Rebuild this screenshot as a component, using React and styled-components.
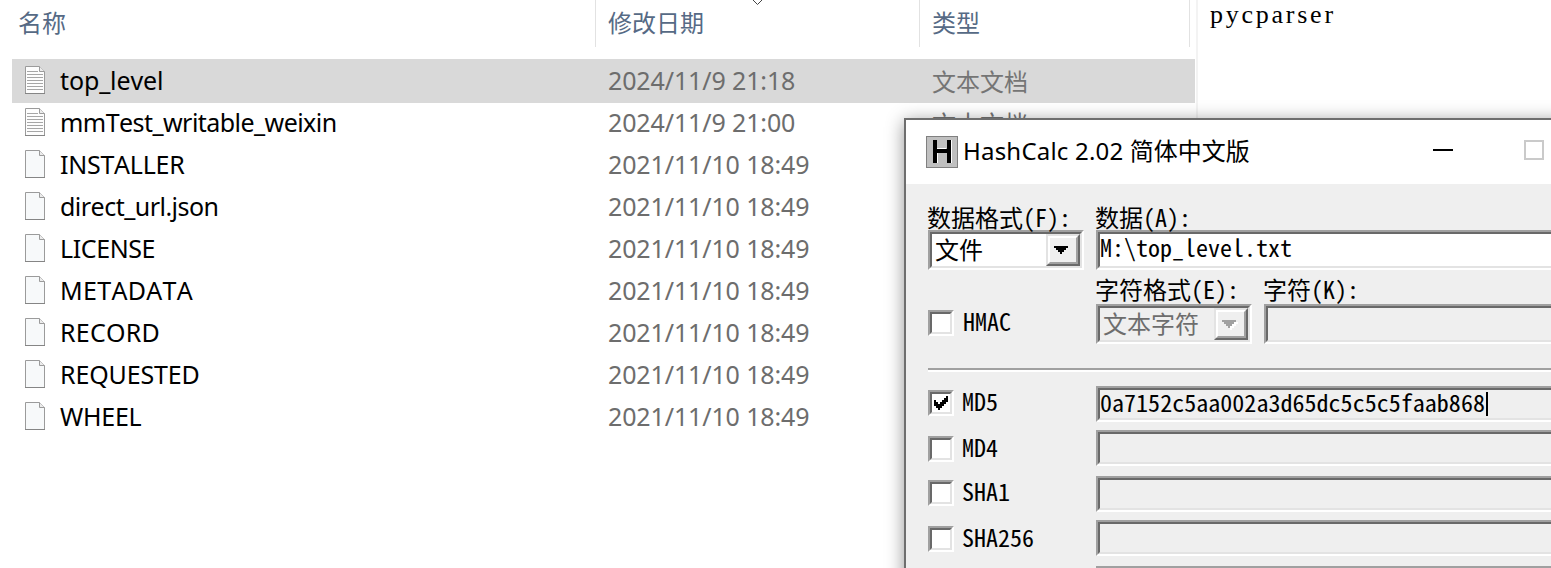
import React from "react";
import styled, { createGlobalStyle, css } from "styled-components";

const GlobalStyle = createGlobalStyle`
  * { box-sizing: border-box; }
  html, body { margin: 0; overflow: hidden; background: #fff; }
`;

const uiFont = '"Noto Sans", "Noto Sans CJK SC", sans-serif';
const bitmapFont = '"Noto Sans Mono CJK SC", "Liberation Mono", "Noto Sans CJK SC", monospace';

const Desktop = styled.div`
  position: relative;
  display: flex;
  width: 1551px;
  height: 568px;
  overflow: hidden;
  background: #fff;
  font-family: ${uiFont};
  font-size: 24px;
  white-space: nowrap;
`;

/* ---------- file list ---------- */
const Explorer = styled.section`
  width: 1196px;
  flex: none;
`;

const columns = css`
  display: grid;
  grid-template-columns: 584px 324px 276px;
`;

const Header = styled.header`
  ${columns}
  height: 47px;
  margin-bottom: 13px;
  grid-template-columns: 596px 324px 270px;
  position: relative;
`;

const HeaderCell = styled.div`
  padding-left: ${(p) => p.$inset}px;
  border-right: 1px solid #e2e2e2;
  color: #566a85;
  font-family: "Noto Sans CJK SC", sans-serif;
  line-height: 44px;
`;

const SortMark = styled.svg`
  position: absolute;
  left: 751px;
  top: 0;
`;

const Row = styled.div`
  ${columns}
  height: 42px;
  margin: 0 1px 0 12px;
  align-items: center;
  line-height: 40px;
  ${(p) =>
    p.$selected &&
    css`
      background: #d9d9d9;
      box-shadow: 0 -1px #d9d9d9, 0 1px #d9d9d9;
    `}
`;

const NameCell = styled.div`
  display: flex;
  align-items: center;
  gap: 14px;
  padding: 0 0 2px 12px;
  color: #000;
`;

const FileName = styled.span`
  font-size: 25px;
  letter-spacing: ${(p) => p.$track}px;
  font-kerning: none;
`;

const DateCell = styled.div`
  padding: 0 0 2px 12px;
  color: #6d6d6d;
  font-size: 25px;
  font-kerning: none;
  letter-spacing: -0.12px;
`;

const TypeCell = styled.div`
  padding: 0 0 1px 12px;
  color: #757575;
  font-family: "Noto Sans CJK SC", sans-serif;
`;

/* ---------- preview pane ---------- */
const Preview = styled.aside`
  flex: 1;
  padding: 0 0 0 12px;
  border-left: 2px solid #f3f3f3;
  font-family: "Liberation Serif", serif;
  font-size: 26px;
  line-height: 30px;
  letter-spacing: 2.75px;
`;

/* ---------- dialog ---------- */
const Dialog = styled.section`
  position: absolute;
  left: 904px;
  top: 118px;
  width: 680px;
  height: 480px;
  border: 2px solid #6e6e6e;
  background: #efefef;
  box-shadow: 0 3px 17px rgba(0, 0, 0, 0.42);
`;

const TitleBar = styled.div`
  display: flex;
  align-items: center;
  height: 64px;
  padding-left: 20px;
  background: #fff;
`;

const Title = styled.h1`
  width: 463px;
  margin: 0 0 4px 5px;
  color: #000;
  font-size: 24px;
  font-weight: 400;
  letter-spacing: 0.2px;
  line-height: 40px;
`;

const TitleCjk = styled.span`
  font-family: "Noto Sans CJK SC", sans-serif;
  letter-spacing: 0;
`;

const MinimizeBar = styled.div`
  width: 20px;
  height: 2px;
  margin: 0 71px 4px 7px;
  background: #000;
`;

const MaximizeBox = styled.div`
  width: 20px;
  height: 20px;
  margin-bottom: 4px;
  border: 2px solid #cacaca;
`;

const Body = styled.div`
  padding: 18px 0 0 22px;
  color: #000;
  font-family: ${bitmapFont};
  font-size: 24px;
`;

const Line = styled.div`
  display: flex;
  align-items: flex-start;
  height: ${(p) => p.$height}px;
`;

const Stack = styled.div`
  width: ${(p) => p.$width}px;
  flex: none;
  padding-top: ${(p) => p.$top || 0}px;
`;

const Label = styled.div`
  height: 28px;
  line-height: ${(p) => p.$leading || 29}px;
  text-indent: -1px;
`;

const Well = styled.div`
  display: flex;
  height: ${(p) => p.$height || 40}px;
  width: ${(p) => (p.$width ? p.$width + "px" : "auto")};
  border: 2px solid;
  border-color: #a0a0a0 #fff #fff #a0a0a0;
  background: ${(p) => (p.$muted ? "#efefef" : "#fff")};
`;

const WellInner = styled.div`
  display: flex;
  align-items: center;
  flex: 1;
  border: 2px solid;
  border-color: #696969 #e3e3e3 #e3e3e3 #696969;
`;

const WellText = styled.span`
  flex: 1;
  padding-left: ${(p) => p.$inset || 0}px;
  padding-bottom: ${(p) => p.$lift || 0}px;
  color: ${(p) => (p.$disabled ? "#6d6d6d" : "#000")};
  line-height: 24px;
`;

const DropButton = styled.div`
  display: flex;
  width: 34px;
  height: 32px;
  border: 2px solid;
  border-color: #e3e3e3 #696969 #696969 #e3e3e3;
  background: #efefef;
`;

const DropFace = styled.div`
  display: flex;
  align-items: center;
  justify-content: center;
  flex: 1;
  padding-right: 4px;
  border: 2px solid;
  border-color: #fff #a0a0a0 #a0a0a0 #fff;
`;

const Field = styled.div`
  width: 500px;
  flex: none;
`;

const CheckCell = styled.div`
  display: flex;
  width: 168px;
  flex: none;
  gap: ${(p) => p.$gap || 8}px;
  padding-top: ${(p) => p.$top}px;
`;

const CheckLabel = styled.span`
  line-height: 22px;
`;

const Box = styled.div`
  width: 26px;
  height: 26px;
  border: 2px solid;
  border-color: #a0a0a0 #fff #fff #a0a0a0;
`;

const BoxInner = styled.div`
  display: flex;
  width: 22px;
  height: 22px;
  padding: 2px;
  border: 2px solid;
  border-color: #696969 #e3e3e3 #e3e3e3 #696969;
  background: #fff;
`;

const Divider = styled.hr`
  height: 4px;
  margin: 24px 0 14px;
  border: 0;
  border-top: 2px solid #a0a0a0;
  border-bottom: 2px solid #fff;
`;

const Hash = styled.span`
  display: inline-flex;
  align-items: center;
  height: 28px;
`;

const HashText = styled.span`
  line-height: 24px;
  margin-bottom: 4px;
  letter-spacing: 0.03px;
`;

const Caret = styled.i`
  width: 2px;
  height: 24px;
  margin-left: 1px;
  background: #000;
`;

const files = [
  { name: "top_level", date: "2024/11/9 21:18", text: true, selected: true, track: -0.13 },
  { name: "mmTest_writable_weixin", date: "2024/11/9 21:00", text: true, track: -0.55 },
  { name: "INSTALLER", date: "2021/11/10 18:49", track: -0.25 },
  { name: "direct_url.json", date: "2021/11/10 18:49", track: -0.52 },
  { name: "LICENSE", date: "2021/11/10 18:49", track: -0.4 },
  { name: "METADATA", date: "2021/11/10 18:49", track: 0.3 },
  { name: "RECORD", date: "2021/11/10 18:49", track: 0.25 },
  { name: "REQUESTED", date: "2021/11/10 18:49", track: -0.15 },
  { name: "WHEEL", date: "2021/11/10 18:49", track: -0.25 },
];

const hashes = [
  { name: "MD5", checked: true, height: 44, value: "0a7152c5aa002a3d65dc5c5c5faab868" },
  { name: "MD4", height: 46, top: 6 },
  { name: "SHA1", height: 44 },
  { name: "SHA256", height: 46, top: 6 },
];

function FileIcon({ lined }) {
  return (
    <svg width="22" height="28" viewBox="0 0 22 28">
      <path d="M1.5.5h14l5 5v22h-19z" fill={lined ? "#fdfdfd" : "#f7f9fa"} stroke="#9b9b9b" />
      <path d="M1 27.5h20" stroke="#858585" />
      <path d="M15.5.5v5h5" fill="#ececec" stroke="#9b9b9b" />
      {lined && (
        <path d="M3 5.5h11M3 8.5h16M3 11.5h16M3 14.5h16M3 17.5h16M3 20.5h16M3 23.5h16" stroke="#a6a6a6" />
      )}
    </svg>
  );
}

function AppIcon() {
  return (
    <svg width="32" height="32" viewBox="0 0 32 32" shapeRendering="crispEdges">
      <path d="M0 0h32v32H0z" fill="#808080" />
      <path d="M1 1h30v30H1z" fill="#c0c0c0" />
      <path d="M11 12h9v1h-9zM25 4h1v23h-1zM11 17h1v10h-1z" fill="#fff" />
      <path d="M7 4h4v9h10V4h4v23h-4V17H11v10H7z" fill="#000" />
    </svg>
  );
}

function DropArrow({ disabled }) {
  return (
    <svg width="18" height="12" viewBox="0 0 18 12" shapeRendering="crispEdges">
      {disabled && <path d="M4 4h14v2h-2v2h-2v2h-2v2h-2V8z" fill="#fff" />}
      <path d="M2 2h14v2h-2v2h-2v2h-2v2H8V8H6V6H4V4H2z" fill={disabled ? "#a0a0a0" : "#000"} />
    </svg>
  );
}

function Checkbox({ checked }) {
  return (
    <Box>
      <BoxInner>
        {checked && (
          <svg width="14" height="14" viewBox="0 0 14 14" shapeRendering="crispEdges">
            <path d="M0 4h2v2h2v2h2V6h2V4h2V2h2V0h2v6h-2v2h-2v2H8v2H6v2H4v-2H2v-2H0z" fill="#000" />
          </svg>
        )}
      </BoxInner>
    </Box>
  );
}

function Combo({ value, disabled }) {
  return (
    <Well $width={156} $muted={disabled}>
      <WellInner>
        <WellText $inset={3} $lift={2} $disabled={disabled}>{value}</WellText>
        <DropButton>
          <DropFace>
            <DropArrow disabled={disabled} />
          </DropFace>
        </DropButton>
      </WellInner>
    </Well>
  );
}

function Input({ children, height, muted }) {
  return (
    <Well $height={height} $muted={muted}>
      <WellInner>{children}</WellInner>
    </Well>
  );
}

export default function App() {
  return (
    <Desktop>
      <GlobalStyle />
      <Explorer>
        <Header>
          <HeaderCell $inset={18}>名称</HeaderCell>
          <HeaderCell $inset={12}>修改日期</HeaderCell>
          <HeaderCell $inset={12}>类型</HeaderCell>
          <SortMark width="14" height="6" viewBox="0 0 14 6">
            <path d="M1.5-.5 6.5 4.5l5-5" fill="none" stroke="#444" />
          </SortMark>
        </Header>
        {files.map((f) => (
          <Row key={f.name} $selected={f.selected}>
            <NameCell>
              <FileIcon lined={f.text} />
              <FileName $track={f.track}>{f.name}</FileName>
            </NameCell>
            <DateCell>{f.date}</DateCell>
            <TypeCell>{f.text ? "文本文档" : ""}</TypeCell>
          </Row>
        ))}
      </Explorer>
      <Preview>pycparser</Preview>

      <Dialog>
        <TitleBar>
          <AppIcon />
          <Title>
            HashCalc 2.02 <TitleCjk>简体中文版</TitleCjk>
          </Title>
          <MinimizeBar />
          <MaximizeBox />
        </TitleBar>
        <Body>
          <Line $height={72}>
            <Stack $width={168}>
              <Label>数据格式(F):</Label>
              <Combo value="文件" />
            </Stack>
            <Stack $width={500}>
              <Label>数据(A):</Label>
              <Input><WellText $lift={7}>M:\top_level.txt</WellText></Input>
            </Stack>
          </Line>
          <Line $height={70}>
            <CheckCell $top={36} $gap={9}>
              <Checkbox />
              <CheckLabel>HMAC</CheckLabel>
            </CheckCell>
            <Stack $width={168} $top={2}>
              <Label $leading={26}>字符格式(E):</Label>
              <Combo value="文本字符" disabled />
            </Stack>
            <Stack $width={400} $top={2}>
              <Label $leading={26}>字符(K):</Label>
              <Input muted />
            </Stack>
          </Line>
          <Divider />
          {hashes.map((h) => (
            <Line key={h.name} $height={h.height}>
              <CheckCell $top={h.top || 4}>
                <Checkbox checked={h.checked} />
                <CheckLabel>{h.name}</CheckLabel>
              </CheckCell>
              <Field>
                <Input height={36} muted>
                  {h.value && (
                    <Hash>
                      <HashText>{h.value}</HashText>
                      <Caret />
                    </Hash>
                  )}
                </Input>
              </Field>
            </Line>
          ))}
          <Line $height={44}>
            <CheckCell $top={4} />
            <Field>
              <Input height={36} muted />
            </Field>
          </Line>
        </Body>
      </Dialog>
    </Desktop>
  );
}
